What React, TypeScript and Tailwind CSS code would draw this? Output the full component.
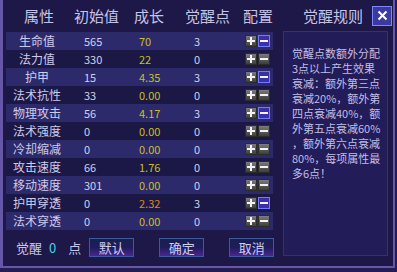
import React from "react";

type Row = { name: string; base: number; grow: string; pts: number; orange?: boolean };

const rows: Row[] = [
  { name: "生命值", base: 565, grow: "70", pts: 3 },
  { name: "法力值", base: 330, grow: "22", pts: 0 },
  { name: "护甲", base: 15, grow: "4.35", pts: 3 },
  { name: "法术抗性", base: 33, grow: "0.00", pts: 0 },
  { name: "物理攻击", base: 56, grow: "4.17", pts: 3 },
  { name: "法术强度", base: 0, grow: "0.00", pts: 0 },
  { name: "冷却缩减", base: 0, grow: "0.00", pts: 0 },
  { name: "攻击速度", base: 66, grow: "1.76", pts: 0 },
  { name: "移动速度", base: 301, grow: "0.00", pts: 0 },
  { name: "护甲穿透", base: 0, grow: "2.32", pts: 3, orange: true },
  { name: "法术穿透", base: 0, grow: "0.00", pts: 0 },
];

const ruleLines = [
  "觉醒点数额外分配",
  "3点以上产生效果",
  "衰减：额外第三点",
  "衰减20%，额外第",
  "四点衰减40%，额",
  "外第五点衰减60%",
  "，额外第六点衰减",
  "80%，每项属性最",
  "多6点！",
];

const PmButton = ({ minus, active }: { minus?: boolean; active?: boolean }) => (
  <div
    className={
      active
        ? "w-[12px] h-[12px] flex items-center justify-center border border-[#6f7cff] bg-[#3a2fa8]"
        : "w-[12px] h-[12px] flex items-center justify-center border border-[#2b2b2b] bg-linear-to-b from-[#7c7c7c] to-[#3e3e3e]"
    }
  >
    <svg width="8" height="8" viewBox="0 0 8 8">
      <rect x="0" y="3" width="8" height="2" fill="#f2f2f2" />
      {!minus && <rect x="3" y="0" width="2" height="8" fill="#f2f2f2" />}
    </svg>
  </div>
);

const ActionButton = ({ label }: { label: string }) => (
  <button className="shrink-0 w-[45px] h-[19px] flex items-center justify-center border border-[#3d5a9c] bg-linear-to-b from-[#18204e] via-[#1f1c5c] to-[#4a2590] text-[13px] leading-none text-[#cfcdf2]">
    {label}
  </button>
);

export default function App() {
  return (
    <div className="w-[397px] h-[272px] bg-[#241c52] font-['Noto_Sans_CJK_SC',sans-serif] overflow-hidden">
      <div className="w-[395px] h-[268px] bg-[#1d1848] border-l-[3px] border-r-2 border-b-2 border-[#6656a6]">
        {/* header */}
        <div className="h-[31px] flex items-center pl-[21px] text-[15px] leading-none text-[#c6c4e6]">
          <span className="w-[50px]">属性</span>
          <span className="w-[60px]">初始值</span>
          <span className="w-[51px]">成长</span>
          <span className="w-[58px]">觉醒点</span>
          <span className="w-[60px]">配置</span>
          <span className="w-[69px]">觉醒规则</span>
          <button className="w-[20px] h-[20px] flex items-center justify-center border border-[#7a8af0] bg-[#3b3aa5]">
            <svg width="11" height="11" viewBox="0 0 11 11">
              <path d="M1.5 1.5 L9.5 9.5 M9.5 1.5 L1.5 9.5" stroke="#ffffff" strokeWidth="2" />
            </svg>
          </button>
        </div>

        <div className="flex items-start">
          {/* left column */}
          <div className="ml-[3px] pt-[1px] w-[267px] shrink-0">
            {rows.map((r, i) => (
              <div
                key={r.name}
                className={
                  i % 2 === 0
                    ? "h-[18px] flex items-center bg-[#2c2a6a]"
                    : "h-[18px] flex items-center bg-[#1c1846]"
                }
              >
                <span className="w-[62px] text-center text-[12px] leading-none text-[#cdcbec]">{r.name}</span>
                <span className="w-[71px] pl-[16px] text-[11px] leading-none text-[#d2d0ee]">{r.base}</span>
                <span
                  className={
                    r.orange
                      ? "w-[55px] text-[11px] leading-none text-[#e2841c]"
                      : "w-[55px] text-[11px] leading-none text-[#c9bf1e]"
                  }
                >
                  {r.grow}
                </span>
                <span className="w-[51px] text-[11px] leading-none text-[#d2d0ee]">{r.pts}</span>
                <div className="flex gap-[1px]">
                  <PmButton />
                  <PmButton minus active={r.pts > 0} />
                </div>
              </div>
            ))}

            {/* bottom bar */}
            <div className="mt-[8px] h-[19px] flex items-center pl-[10px] whitespace-nowrap text-[13px] leading-none text-[#c6c4e6]">
              <span className="shrink-0">觉醒</span>
              <span className="shrink-0 ml-[7px] text-[#45d2e6]">0</span>
              <span className="shrink-0 ml-[12px]">点</span>
              <div className="shrink-0 ml-[8px] flex gap-[25px]">
                <ActionButton label="默认" />
                <ActionButton label="确定" />
                <ActionButton label="取消" />
              </div>
            </div>
          </div>

          {/* rules panel */}
          <div className="shrink-0 ml-[10px] w-[105px] h-[225px] border border-[#363072] bg-[#221c58] pl-[8px] pt-[14px] text-[11px] leading-[15px] text-[#c2bee4]">
            {ruleLines.map((l) => (
              <div key={l} className="whitespace-nowrap">
                {l}
              </div>
            ))}
          </div>
        </div>
      </div>
    </div>
  );
}
